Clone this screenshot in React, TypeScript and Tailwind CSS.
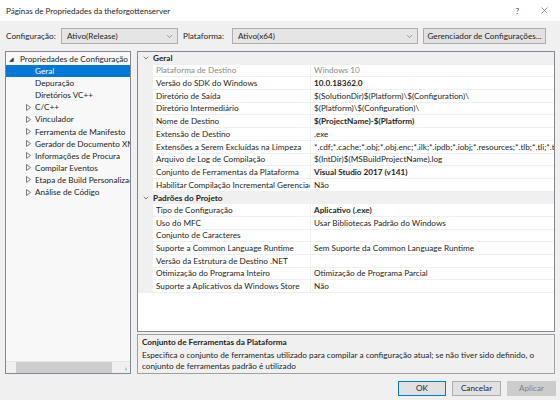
import { ChevronDown, X } from "lucide-react";

const font = { fontFamily: 'Lato, "Noto Sans", sans-serif' };

type Row = { name: string; value: string; bold?: boolean; dim?: boolean };

const geral: Row[] = [
  { name: "Plataforma de Destino", value: "Windows 10", dim: true },
  { name: "Versão do SDK do Windows", value: "10.0.18362.0", bold: true },
  { name: "Diretório de Saída", value: "$(SolutionDir)$(Platform)\\$(Configuration)\\" },
  { name: "Diretório Intermediário", value: "$(Platform)\\$(Configuration)\\" },
  { name: "Nome de Destino", value: "$(ProjectName)-$(Platform)", bold: true },
  { name: "Extensão de Destino", value: ".exe" },
  {
    name: "Extensões a Serem Excluídas na Limpeza",
    value: "*.cdf;*.cache;*.obj;*.obj.enc;*.ilk;*.ipdb;*.iobj;*.resources;*.tlb;*.tli;*.tlh;*.tmp",
  },
  { name: "Arquivo de Log de Compilação", value: "$(IntDir)$(MSBuildProjectName).log" },
  { name: "Conjunto de Ferramentas da Plataforma", value: "Visual Studio 2017 (v141)", bold: true },
  { name: "Habilitar Compilação Incremental Gerenciada", value: "Não" },
];

const padroes: Row[] = [
  { name: "Tipo de Configuração", value: "Aplicativo (.exe)", bold: true },
  { name: "Uso do MFC", value: "Usar Bibliotecas Padrão do Windows" },
  { name: "Conjunto de Caracteres", value: "" },
  { name: "Suporte a Common Language Runtime", value: "Sem Suporte da Common Language Runtime" },
  { name: "Versão da Estrutura de Destino .NET", value: "" },
  { name: "Otimização do Programa Inteiro", value: "Otimização de Programa Parcial" },
  { name: "Suporte a Aplicativos da Windows Store", value: "Não" },
];

const treeItems: { label: string; arrow?: boolean }[] = [
  { label: "Depuração" },
  { label: "Diretórios VC++" },
  { label: "C/C++", arrow: true },
  { label: "Vinculador", arrow: true },
  { label: "Ferramenta de Manifesto", arrow: true },
  { label: "Gerador de Documento XML", arrow: true },
  { label: "Informações de Procura", arrow: true },
  { label: "Compilar Eventos", arrow: true },
  { label: "Etapa de Build Personalizada", arrow: true },
  { label: "Análise de Código", arrow: true },
];

function Combo({ value, className }: { value: string; className: string }) {
  return (
    <div
      className={`flex h-[16px] shrink-0 items-center justify-between border border-[#adadad] bg-[#e5e5e5] pl-[5px] pr-[3px] ${className}`}
    >
      <span>{value}</span>
      <ChevronDown className="h-[9px] w-[9px] text-[#606060]" strokeWidth={1.5} />
    </div>
  );
}

function Category({ title }: { title: string }) {
  return (
    <div className="flex h-[12.7px] items-center bg-[#f0f0f0]">
      <div className="flex w-[15px] justify-center">
        <ChevronDown className="h-[8px] w-[8px] text-[#444]" strokeWidth={2} />
      </div>
      <span className="font-bold">{title}</span>
    </div>
  );
}

function PropRow({ row }: { row: Row }) {
  return (
    <div className="flex h-[12.7px] items-stretch">
      <div className="w-[15px] shrink-0 bg-[#f0f0f0]" />
      <div
        className={`flex w-[158px] shrink-0 items-center overflow-hidden whitespace-nowrap border-b border-r border-[#f0f0f0] pl-[3px] ${
          row.dim ? "text-[#8a8a8a]" : ""
        }`}
      >
        {row.name}
      </div>
      <div
        className={`flex min-w-0 flex-1 items-center overflow-hidden whitespace-nowrap border-b border-[#f0f0f0] pl-[3px] ${
          row.bold ? "font-bold" : ""
        } ${row.dim ? "text-[#8a8a8a]" : ""}`}
      >
        {row.value}
      </div>
    </div>
  );
}

function Arrow() {
  return (
    <svg width="5" height="7" viewBox="0 0 5 7" className="text-[#777]">
      <path d="M0.5 0.5 L4.5 3.5 L0.5 6.5 Z" fill="none" stroke="currentColor" strokeWidth="1" />
    </svg>
  );
}

export default function App() {
  return (
    <div
      className="flex h-[400px] w-[560px] flex-col overflow-hidden bg-[#f0f0f0] text-[8.2px] leading-none text-[#1e1e1e]"
      style={font}
    >
      <div className="flex h-[21px] shrink-0 items-center justify-between bg-white pl-[6px] pr-[10px] text-[8px]">
        <span>Páginas de Propriedades da theforgottenserver</span>
        <div className="flex items-center gap-[20px] text-[#444]">
          <span className="text-[8px]">?</span>
          <X className="h-[11px] w-[11px]" strokeWidth={1.2} />
        </div>
      </div>

      <div className="mt-[7px] flex h-[16px] shrink-0 items-center pl-[6px]">
        <span className="w-[55px] shrink-0">Configuração:</span>
        <Combo value="Ativo(Release)" className="w-[117px]" />
        <span className="ml-[5px] w-[49px] shrink-0">Plataforma:</span>
        <Combo value="Ativo(x64)" className="w-[186px]" />
        <div className="ml-[5px] flex h-[16px] w-[123px] shrink-0 items-center justify-center border border-[#adadad] bg-[#e1e1e1]">
          Gerenciador de Configurações...
        </div>
      </div>

      <div className="mt-[7px] flex h-[323px] shrink-0 pl-[5px] pr-[5px]">
        <div className="flex w-[126px] shrink-0 flex-col border border-[#828790] bg-[#f8f8f8]">
          <div className="flex-1 overflow-hidden pt-[1px]">
            <div className="flex h-[12.1px] items-center whitespace-nowrap">
              <span className="w-[14px] shrink-0 pl-[3px] text-[6px] text-[#333]">◢</span>
              <span>Propriedades de Configuração</span>
            </div>
            <div className="flex h-[12.1px] items-center bg-[#0078d7] pl-[29px] text-white">Geral</div>
            {treeItems.map((item) => (
              <div key={item.label} className="flex h-[12.1px] items-center whitespace-nowrap">
                <span className="flex w-[29px] shrink-0 pl-[20px]">{item.arrow ? <Arrow /> : null}</span>
                <span>{item.label}</span>
              </div>
            ))}
          </div>
          <div className="flex h-[12px] items-center border-t border-[#e6e6e6] bg-[#f0f0f0]">
            <div className="w-[10px]" />
            <div className="h-[11px] w-[96px] bg-[#cdcdcd]" />
            <div className="flex-1" />
            <span className="pr-[3px] text-[8px] text-[#606060]">›</span>
          </div>
        </div>

        <div className="ml-[6px] flex min-w-0 flex-1 flex-col">
          <div className="h-[281px] shrink-0 overflow-hidden border border-[#828790] bg-white">
            <Category title="Geral" />
            {geral.map((r) => (
              <PropRow key={r.name} row={r} />
            ))}
            <Category title="Padrões do Projeto" />
            {padroes.map((r) => (
              <PropRow key={r.name} row={r} />
            ))}
          </div>
          <div className="mt-[2px] h-[40px] shrink-0 border border-[#a0a0a0] bg-[#f0f0f0] px-[4px] pt-[3px]">
            <div className="font-bold">Conjunto de Ferramentas da Plataforma</div>
            <div className="mt-[4px] leading-[11px]">
              Especifica o conjunto de ferramentas utilizado para compilar a configuração atual; se não tiver sido definido, o
              conjunto de ferramentas padrão é utilizado
            </div>
          </div>
        </div>
      </div>

      <div className="mt-[7px] flex shrink-0 justify-end gap-[6px] pr-[4px]">
        <div className="flex h-[15px] w-[48px] items-center justify-center border border-[#0078d7] bg-[#e1e1e1]">OK</div>
        <div className="flex h-[15px] w-[49px] items-center justify-center border border-[#adadad] bg-[#e1e1e1]">
          Cancelar
        </div>
        <div className="flex h-[15px] w-[49px] items-center justify-center border border-[#cccccc] bg-[#cccccc] text-[#838383]">
          Aplicar
        </div>
      </div>
    </div>
  );
}
